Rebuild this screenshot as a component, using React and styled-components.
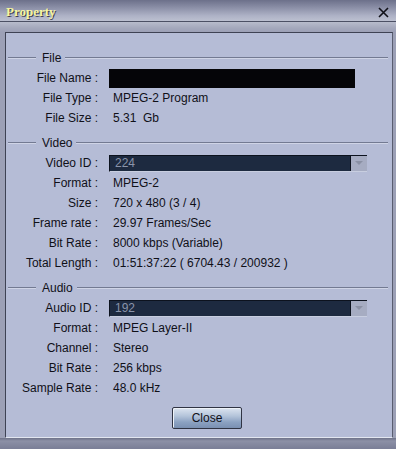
import React from "react";
import styled, { createGlobalStyle } from "styled-components";

const Global = createGlobalStyle`
  html, body { margin: 0; padding: 0; background: #9a9eb4; }
  body { font-family: "Liberation Sans", Arial, sans-serif; }
`;

const Window = styled.div`
  width: 396px;
  height: 449px;
  display: flex;
  flex-direction: column;
  background: linear-gradient(90deg, #8e92aa 0px, #c4c8d8 2px, #a4a8bc 5px, #a4a8bc 391px, #c0c4d4 394px, #8a8ea4 396px);
  overflow: hidden;
`;

const TitleBar = styled.div`
  height: 22px;
  flex: none;
  display: flex;
  align-items: center;
  justify-content: space-between;
  padding: 0 7px 0 6px;
  box-sizing: border-box;
  border-bottom: 1px solid #4c5064;
  background: linear-gradient(180deg, #6c708a 0%, #8a8ea6 35%, #aeb2c6 75%, #bcc0d0 100%);
`;

const Title = styled.span`
  font-family: "Liberation Serif", "Times New Roman", serif;
  font-weight: bold;
  font-size: 13px;
  color: #f6f6a0;
  text-shadow: 1px 1px 0 #3c3e50;
  padding-top: 2px;
`;

const CloseX = styled.svg`
  width: 11px;
  height: 11px;
  margin-top: 3px;
`;

const Frame = styled.div`
  flex: 1;
  display: flex;
  flex-direction: column;
  padding: 10px 3px 0 5px;
  background: linear-gradient(180deg, #b8bccc 0px, #a4a8bc 6px, #9ca0b6 10px);
`;

const Panel = styled.div`
  flex: none;
  height: 406px;
  box-sizing: border-box;
  background: #b5bcd6;
  border: 1px solid #3e4254;
  border-right-color: #5a5e70;
  border-bottom-color: #e2e6f0;
  padding: 15px 4px 0 2px;
  display: flex;
  flex-direction: column;
`;

const BottomBand = styled.div`
  flex: 1;
  background: linear-gradient(180deg, #6e7288 0px, #8c90a6 3px, #7c8098 10px);
  margin: 0 -3px 0 -5px;
`;

const SectionHeader = styled.div`
  height: 20px;
  display: flex;
  align-items: center;
  margin-top: ${(p) => (p.$first ? "0" : "5px")};
  font-size: 12px;
  color: #101018;
`;

const Rule = styled.div`
  height: 1px;
  background: #737a92;
  border-bottom: 1px solid #cfd4e6;
  flex: ${(p) => (p.$grow ? "1" : "none")};
  width: ${(p) => (p.$grow ? "auto" : "28px")};
`;

const SectionTitle = styled.span`
  padding: 0 4px 0 6px;
`;

const Row = styled.div`
  height: 20px;
  display: grid;
  grid-template-columns: 90px 1fr;
  column-gap: 11px;
  align-items: center;
  font-size: 12px;
  color: #101018;
`;

const Label = styled.span`
  text-align: right;
  white-space: nowrap;
`;

const Value = styled.span`
  padding-left: 4px;
  white-space: nowrap;
`;

const Redacted = styled.div`
  width: 246px;
  height: 19px;
  background: #050508;
`;

const Select = styled.div`
  width: 258px;
  height: 17px;
  box-sizing: border-box;
  display: flex;
  background: #1d2a40;
  border-top: 1px solid #0c121e;
  border-left: 1px solid #0c121e;
  border-bottom: 1px solid #c8cee0;
`;

const SelectText = styled.span`
  flex: 1;
  color: #8a94aa;
  font-size: 12px;
  line-height: 15px;
  padding-left: 5px;
`;

const SelectButton = styled.div`
  width: 16px;
  background: #a6acc2;
  border-left: 1px solid #0c121e;
  display: flex;
  align-items: center;
  justify-content: center;
`;

const ButtonRow = styled.div`
  display: flex;
  justify-content: center;
  padding-left: 18px;
  margin-top: 9px;
`;

const Button = styled.button`
  width: 70px;
  height: 22px;
  font-family: "Liberation Sans", Arial, sans-serif;
  font-size: 12px;
  color: #101018;
  border: 1px solid #303444;
  border-radius: 2px;
  background: linear-gradient(180deg, #dce4f0 0%, #b4c4da 40%, #8ca2c2 70%, #7a90b2 100%);
  box-shadow: inset 1px 1px 0 #eef2f8;
  padding: 0;
`;

const Section = ({ title, first }) => (
  <SectionHeader $first={first}>
    <Rule />
    <SectionTitle>{title}</SectionTitle>
    <Rule $grow />
  </SectionHeader>
);

const Field = ({ label, children }) => (
  <Row>
    <Label>{label}</Label>
    {children}
  </Row>
);

const Dropdown = ({ value }) => (
  <Select>
    <SelectText>{value}</SelectText>
    <SelectButton>
      <svg width="8" height="5" viewBox="0 0 8 5">
        <path d="M0 0 L8 0 L4 4 Z" fill="#8a90a4" />
      </svg>
    </SelectButton>
  </Select>
);

export default function App() {
  return (
    <>
      <Global />
      <Window>
        <TitleBar>
          <Title>Property</Title>
          <CloseX viewBox="0 0 11 11">
            <path d="M1 1 L10 10 M10 1 L1 10" stroke="#101018" strokeWidth="1.6" />
          </CloseX>
        </TitleBar>
        <Frame>
          <Panel>
            <Section title="File" first />
            <Field label="File Name :">
              <Redacted />
            </Field>
            <Field label="File Type :">
              <Value>MPEG-2 Program</Value>
            </Field>
            <Field label="File Size :">
              <Value>5.31&nbsp;&nbsp;Gb</Value>
            </Field>

            <Section title="Video" />
            <Field label="Video ID :">
              <Dropdown value="224" />
            </Field>
            <Field label="Format :">
              <Value>MPEG-2</Value>
            </Field>
            <Field label="Size :">
              <Value>720 x 480 (3 / 4)</Value>
            </Field>
            <Field label="Frame rate :">
              <Value>29.97 Frames/Sec</Value>
            </Field>
            <Field label="Bit Rate :">
              <Value>8000 kbps (Variable)</Value>
            </Field>
            <Field label="Total Length :">
              <Value>01:51:37:22 ( 6704.43 / 200932 )</Value>
            </Field>

            <Section title="Audio" />
            <Field label="Audio ID :">
              <Dropdown value="192" />
            </Field>
            <Field label="Format :">
              <Value>MPEG Layer-II</Value>
            </Field>
            <Field label="Channel :">
              <Value>Stereo</Value>
            </Field>
            <Field label="Bit Rate :">
              <Value>256 kbps</Value>
            </Field>
            <Field label="Sample Rate :">
              <Value>48.0 kHz</Value>
            </Field>

            <ButtonRow>
              <Button>Close</Button>
            </ButtonRow>
          </Panel>
          <BottomBand />
        </Frame>
      </Window>
    </>
  );
}
